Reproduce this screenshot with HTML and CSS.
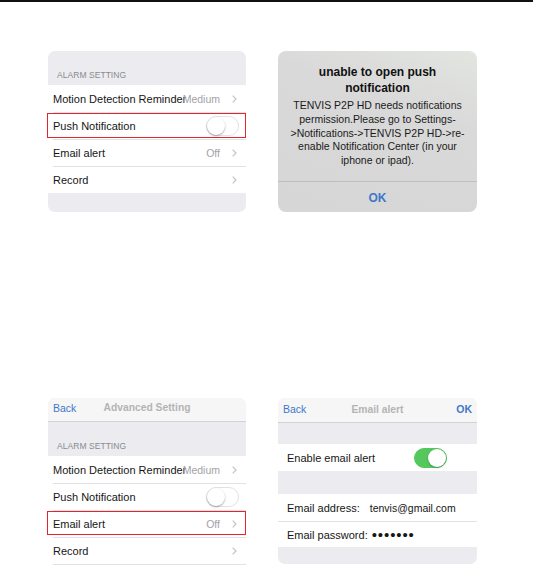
FILE: index.html
```html
<!DOCTYPE html>
<html>
<head>
<meta charset="utf-8">
<link rel="stylesheet" href="styles.css">
</head>
<body>
<div class="topbar"></div>
<main class="grid">
  <section class="panel settings">
    <div class="group-head first">ALARM SETTING</div>
    <ul class="list">
      <li class="row"><div class="cell"><span class="label">Motion Detection Reminder</span><span class="value">Medium</span><svg class="chev" viewBox="0 0 5 8"><polyline points="0.7,0.7 4,4 0.7,7.3"/></svg></div></li>
      <li class="row marked"><div class="cell"><span class="label">Push Notification</span><span class="switch"></span></div></li>
      <li class="row"><div class="cell"><span class="label">Email alert</span><span class="value">Off</span><svg class="chev" viewBox="0 0 5 8"><polyline points="0.7,0.7 4,4 0.7,7.3"/></svg></div></li>
      <li class="row"><div class="cell"><span class="label">Record</span><span class="value"></span><svg class="chev" viewBox="0 0 5 8"><polyline points="0.7,0.7 4,4 0.7,7.3"/></svg></div></li>
    </ul>
    <div class="group-foot"></div>
  </section>

  <section class="panel alert">
    <h2 class="alert-title">unable to open push<br>notification</h2>
    <p class="alert-body">TENVIS P2P HD needs notifications<br>permission.Please go to Settings-<br>&gt;Notifications-&gt;TENVIS P2P HD-&gt;re-<br>enable Notification Center (in your<br>iphone or ipad).</p>
    <div class="alert-btn">OK</div>
  </section>

  <section class="panel settings cut">
    <div class="nav nav-short">
      <span class="nav-back">Back</span>
      <span class="nav-title">Advanced Setting</span>
      <span></span>
    </div>
    <div class="group-head">ALARM SETTING</div>
    <ul class="list">
      <li class="row"><div class="cell"><span class="label">Motion Detection Reminder</span><span class="value">Medium</span><svg class="chev" viewBox="0 0 5 8"><polyline points="0.7,0.7 4,4 0.7,7.3"/></svg></div></li>
      <li class="row"><div class="cell"><span class="label">Push Notification</span><span class="switch"></span></div></li>
      <li class="row marked low"><div class="cell"><span class="label">Email alert</span><span class="value">Off</span><svg class="chev" viewBox="0 0 5 8"><polyline points="0.7,0.7 4,4 0.7,7.3"/></svg></div></li>
      <li class="row"><div class="cell"><span class="label">Record</span><span class="value"></span><svg class="chev" viewBox="0 0 5 8"><polyline points="0.7,0.7 4,4 0.7,7.3"/></svg></div></li>
      <li class="row"><div class="cell"><span class="label"></span></div></li>
    </ul>
  </section>

  <section class="panel email">
    <div class="nav">
      <span class="nav-back">Back</span>
      <span class="nav-title">Email alert</span>
      <span class="nav-ok">OK</span>
    </div>
    <div class="band b1"></div>
    <div class="erow enable"><span class="label">Enable email alert</span><span class="switch on"></span></div>
    <div class="band b2"></div>
    <div class="erow field"><span class="label">Email address:</span><span class="addr">tenvis@gmail.com</span></div>
    <div class="erow field pwrow"><span class="label">Email password:</span><span class="pw">•••••••</span></div>
    <div class="band b3"></div>
  </section>
</main>
</body>
</html>
```

FILE: styles.css
```css
* { box-sizing: border-box; }
html, body { margin: 0; padding: 0; }
body {
  background: #fff;
  font-family: "Liberation Sans", Arial, sans-serif;
  color: #161616;
  width: 533px;
  height: 565px;
  overflow: hidden;
}
.topbar { height: 2px; background: #111; }
.grid {
  display: grid;
  grid-template-columns: 198px 199px;
  column-gap: 32px;
  row-gap: 186px;
  padding: 49px 0 0 48px;
  align-items: start;
}
.panel { background: #ececf0; border-radius: 7px; }

/* settings list */
.group-head {
  height: 34px;
  padding: 19px 0 0 9px;
  font-size: 8.5px;
  line-height: 10px;
  color: #8a8a8e;
  letter-spacing: 0.05px;
}
.list { list-style: none; margin: 0; padding: 0; background: #fff; }
.row { position: relative; height: 27px; padding-left: 5px; }
.cell {
  height: 100%;
  display: flex;
  align-items: center;
  padding-right: 9px;
}
.row + .row .cell { border-top: 1px solid #e2e2e6; }
.label {
  flex: 1 1 auto;
  min-width: 0;
  white-space: nowrap;
  font-size: 11px;
  color: #161616;
}
.value {
  flex: 0 0 auto;
  font-size: 10.5px;
  color: #a2a2a6;
  margin-right: 12px;
}
.chev {
  flex: 0 0 auto;
  width: 5px;
  height: 8px;
  fill: none;
  stroke: #c4c4c8;
  stroke-width: 1.2;
}
.row .switch { margin-right: -2px; }
.marked::after {
  content: "";
  position: absolute;
  top: 1px;
  bottom: 1px;
  left: -1px;
  right: 0;
  border: 1px solid #e3262b;
}
.marked.low::after { bottom: 2px; }
.group-foot { height: 19px; border-radius: 0 0 7px 7px; }

/* switch */
.switch {
  position: relative;
  flex: 0 0 auto;
  width: 33px;
  height: 20px;
  border-radius: 10px;
  background: #fff;
  border: 1px solid #e2e2e2;
}
.switch::before {
  content: "";
  position: absolute;
  top: 0;
  left: 0;
  width: 18px;
  height: 18px;
  border-radius: 50%;
  background: #fff;
  box-shadow: 0 1px 2px rgba(0,0,0,0.35);
}
.switch.on { background: #55c85d; border-color: #55c85d; }
.switch.on::before { left: auto; right: 0; box-shadow: 0 1px 2px rgba(0,0,0,0.25); }

/* alert */
.alert {
  height: 161px;
  border-radius: 8px;
  background: linear-gradient(200deg, #e2e5e0 0%, #d9d9d9 35%, #d6d6d6 100%);
  text-align: center;
  display: flex;
  flex-direction: column;
  padding-top: 13px;
}
.alert-title {
  margin: 0;
  font-size: 12px;
  line-height: 16px;
  font-weight: bold;
  color: #111;
}
.alert-body {
  margin: 3px 0 0;
  font-size: 10.5px;
  line-height: 13.8px;
  color: #1a1a1a;
  white-space: nowrap;
}
.alert-btn {
  margin-top: 13px;
  border-top: 1px solid #bfbfbf;
  flex: 1;
  display: flex;
  align-items: center;
  justify-content: center;
  padding-top: 2px;
  font-size: 12px;
  font-weight: bold;
  color: #3e78c8;
}

/* nav bars */
.nav {
  height: 25px;
  background: #f6f6f6;
  border-bottom: 1px solid #d2d2d4;
  border-radius: 7px 7px 0 0;
  display: grid;
  grid-template-columns: 1fr auto 1fr;
  align-items: center;
  padding: 0 5px 2px;
}
.nav-short { height: 24px; padding-bottom: 4px; }
.nav-back { font-size: 10.5px; color: #3e78c8; }
.nav-title { font-size: 10.3px; font-weight: bold; color: #b4b4b4; }
.nav-ok { justify-self: end; font-size: 10.5px; font-weight: bold; color: #3e78c8; }

.cut { border-radius: 7px 7px 0 0; height: 180px; }

/* email panel */
.email { height: 166px; }
.band.b1 { height: 21px; }
.band.b2 { height: 23px; }
.band.b3 { height: 17px; }
.erow {
  background: #fff;
  display: flex;
  align-items: center;
  padding-left: 9px;
  height: 27px;
}
.erow .label { flex: 0 0 auto; }
.enable .switch { margin-left: 39px; }
.pwrow { height: 26px; border-top: 1px solid #e2e2e6; }
.addr { margin-left: 10px; font-size: 10.5px; color: #161616; }
.pw { margin-left: 4px; font-size: 15px; letter-spacing: 0.9px; color: #161616; line-height: 10px; }
```
